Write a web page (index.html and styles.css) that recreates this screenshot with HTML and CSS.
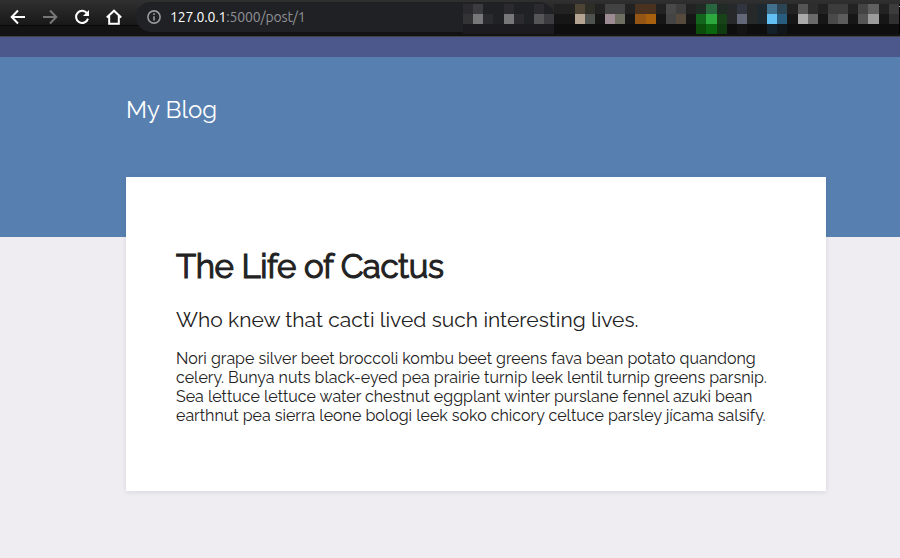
FILE: index.html
```html
<!DOCTYPE html>
<html lang="en">
<head>
<meta charset="utf-8">
<title>My Blog</title>
<link rel="stylesheet" href="styles.css">
</head>
<body>
<header class="toolbar">
  <nav class="controls">
    <svg class="icon" viewBox="0 0 16 16"><path d="M15 8H2M8 1.5 1.7 8 8 14.5"/></svg>
    <svg class="icon dim" viewBox="0 0 16 16"><path d="M1 8h13M8 1.5 14.3 8 8 14.5"/></svg>
    <svg class="icon" viewBox="0 0 16 16"><path d="M13.2 4.4A6.1 6.1 0 1 0 14 9.6"/><path class="solid" d="M15 1v6H9z"/></svg>
    <svg class="icon" viewBox="0 0 16 16"><path d="M.8 8.5 8 1.7l7.2 6.8M3.2 7v7.7h9.6V7"/></svg>
  </nav>
  <div class="address">
    <svg class="info" viewBox="0 0 14 14"><circle cx="7" cy="7" r="6.1"/><path d="M7 6.2v4.3M7 3.3v1.6"/></svg>
    <span class="url"><span class="host">127.0.0.1</span>:5000/post/1</span>
  </div>
  <svg class="extensions" viewBox="463 4 437 30" shape-rendering="crispEdges">
    <path fill="#1c1c20" d="M463 24h91v10h-91z"/>
    <path fill="#222" d="M554 4h346v10H554z"/><path fill="#161616" d="M554 14h346v10H554z"/><path fill="#0e0e0e" d="M554 24h346v10H554z"/>
    <path fill="#2b2b2f" d="M463 4h10v10h-10zM504 4h10v10h-10zM534 4h10v10h-10z"/>
    <path fill="#333335" d="M463 14h10v10h-10z"/><path fill="#3b3b40" d="M473 4h10v10h-10zM544 14h10v10h-10z"/>
    <path fill="#77777a" d="M473 14h10v10h-10zM504 14h10v10h-10z"/>
    <path fill="#2a2a2f" d="M483 14h10v10h-10zM514 14h10v10h-10z"/><path fill="#555558" d="M534 14h10v10h-10z"/>
    <path fill="#4d4436" d="M575 4h10v10h-10z"/><path fill="#b5a491" d="M575 14h10v10h-10z"/>
    <path fill="#2e2e28" d="M585 4h10v10h-10z"/><path fill="#4e534f" d="M585 14h10v10h-10z"/>
    <path fill="#424242" d="M605 4h20v10h-20z"/><path fill="#9c8b92" d="M605 14h10v10h-10z"/><path fill="#6e6f60" d="M615 14h10v10h-10z"/>
    <path fill="#4a3220" d="M635 4h21v10h-21z"/><path fill="#955514" d="M635 14h11v10h-11z"/><path fill="#a8600f" d="M646 14h10v10h-10z"/>
    <path fill="#494949" d="M666 4h10v10h-10z"/><path fill="#444" d="M666 14h10v10h-10z"/><path fill="#3d3d3d" d="M676 4h10v10h-10z"/><path fill="#554a3c" d="M676 14h10v10h-10z"/>
    <path fill="#202b26" d="M696 4h31v10h-31z"/><path fill="#13651e" d="M696 14h10v10h-10z"/><path fill="#0c4d0c" d="M696 24h10v10h-10z"/>
    <path fill="#28663f" d="M706 4h11v10h-11z"/><path fill="#2ca83f" d="M706 14h11v10h-11z"/><path fill="#0a660f" d="M706 24h11v10h-11z"/>
    <path fill="#184218" d="M717 14h10v10h-10z"/><path fill="#103a10" d="M717 24h10v10h-10z"/>
    <path fill="#26282a" d="M727 4h10v20h-10zM747 4h10v20h-10z"/><path fill="#31353f" d="M737 4h10v10h-10z"/><path fill="#626877" d="M737 14h10v10h-10z"/><path fill="#141414" d="M737 24h10v10h-10z"/>
    <path fill="#1e292f" d="M757 4h10v20h-10z"/><path fill="#40708c" d="M767 4h10v10h-10z"/><path fill="#62c0f4" d="M767 14h10v10h-10z"/><path fill="#15212a" d="M767 24h10v10h-10z"/>
    <path fill="#2c4555" d="M777 4h10v10h-10z"/><path fill="#285d80" d="M777 14h10v10h-10z"/><path fill="#10161a" d="M777 24h10v10h-10z"/>
    <path fill="#555" d="M798 4h10v10h-10zM858 14h10v10h-10z"/><path fill="#aaa" d="M798 14h10v10h-10z"/><path fill="#2d2d2d" d="M808 4h10v10h-10z"/><path fill="#6a6a6a" d="M808 14h10v10h-10z"/>
    <path fill="#3c3c3c" d="M828 4h20v10h-20zM889 4h10v10h-10z"/><path fill="#4a4a4a" d="M828 14h10v10h-10z"/><path fill="#5c5c5c" d="M838 14h10v10h-10z"/>
    <path fill="#444" d="M858 4h10v10h-10z"/><path fill="#606060" d="M868 4h11v10h-11z"/><path fill="#9c9c9c" d="M868 14h11v10h-11z"/><path fill="#303030" d="M889 14h10v10h-10z"/>
    <path fill="#000" d="M899 4h1v30h-1z"/><path fill="#bbb" d="M899 6h1v1h-1z"/>
  </svg>
</header>
<div class="stripe"></div>
<div class="banner"><a class="brand">My Blog</a></div>
<main class="post">
  <h1>The Life of Cactus</h1>
  <h2>Who knew that cacti lived such interesting lives.</h2>
  <p>Nori grape silver beet broccoli kombu beet greens fava bean potato quandong celery. Bunya nuts black-eyed pea prairie turnip leek lentil turnip greens parsnip. Sea lettuce lettuce water chestnut eggplant winter purslane fennel azuki bean earthnut pea sierra leone bologi leek soko chicory celtuce parsley jícama salsify.</p>
</main>
</body>
</html>
```

FILE: styles.css
```css
* { box-sizing: border-box; }
body {
  margin: 0;
  height: 558px;
  overflow: hidden;
  background: #efedf2;
  color: #222;
  font-family: Raleway, Lato, sans-serif;
}
.toolbar {
  position: relative;
  display: flex;
  height: 37px;
  padding-top: 2px;
  border-bottom: 1px solid #434343;
  background: linear-gradient(#303030, #181818 25px, #080808 25px, #080808 26px, #131313 26px);
}
.controls {
  display: flex;
  gap: 16px;
  width: 136px;
  padding: 7px 0 0 10px;
}
.icon {
  width: 16px;
  height: 16px;
  fill: none;
  stroke: #fff;
  stroke-width: 2;
}
.icon.dim { stroke: #777; }
.icon .solid { fill: #fff; stroke: none; }
.address {
  display: flex;
  align-items: center;
  width: 418px;
  height: 30px;
  padding-left: 11px;
  border-radius: 15px;
  background: #202125;
}
.info {
  width: 14px;
  height: 14px;
  margin-right: 9px;
  fill: none;
  stroke: #9a9a9e;
  stroke-width: 1.6;
}
.url {
  color: #919195;
  font: 14px/20px Ubuntu, "Noto Sans", sans-serif;
  letter-spacing: -0.1px;
}
.url { letter-spacing: -0.16px; }
.host { color: #fff; }
.extensions {
  position: absolute;
  right: 0;
  top: 4px;
  width: 437px;
  height: 30px;
}
.stripe { height: 20px; background: #4c578c; }
.banner {
  height: 180px;
  padding: 37px 0 0 126px;
  background: #5780b1;
}
.brand {
  color: #fff;
  font-size: 24px;
  line-height: 32px;
}
.post {
  position: relative;
  width: 700px;
  height: 314px;
  margin: -60px 0 0 126px;
  padding: 70px 50px 0;
  background: #fff;
  box-shadow: 0 1px 5px rgba(40, 50, 80, .12);
}
h1 {
  margin: 0;
  font-size: 33px;
  line-height: 40px;
  font-weight: 400;
  letter-spacing: -0.42px;
  -webkit-text-stroke: 1.1px #222;
}
h2 {
  margin: 19px 0 0;
  font-size: 21px;
  line-height: 28px;
  font-weight: 400;
}
p {
  margin: 15px 0 0;
  font-size: 16px;
  line-height: 19px;
}
```
